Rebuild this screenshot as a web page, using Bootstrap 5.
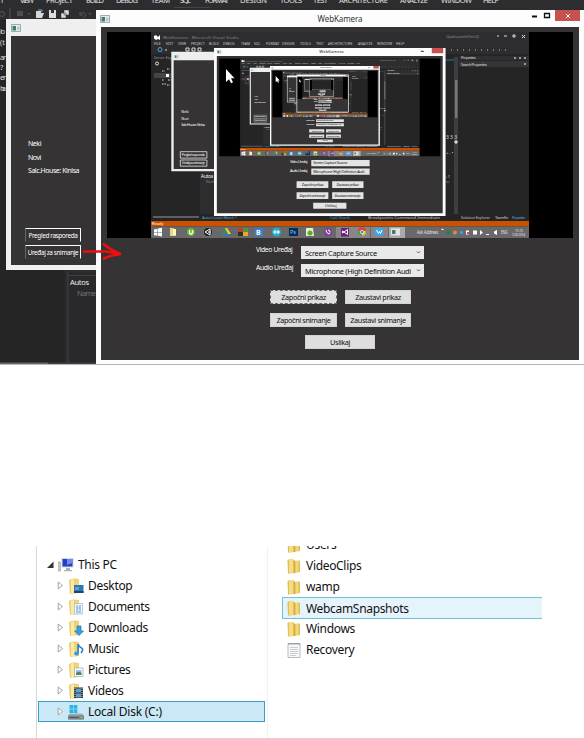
<!DOCTYPE html>
<html lang="hr">
<head>
<meta charset="utf-8">
<title>WebKamera</title>
<meta name="viewport" content="width=device-width, initial-scale=1">
<link href="https://cdn.jsdelivr.net/npm/bootstrap@5.3.0/dist/css/bootstrap.min.css" rel="stylesheet">
<style>
body{width:584px;height:738px;overflow:hidden;background:#fff;color:#111;font-family:"Noto Sans","Open Sans",sans-serif;font-size:12px}
.desktop{height:365px;background:#252526;border-bottom:1px solid #b5b5b5}
.ide-top{height:20px;background:#2d2d30}
.ide-svg{left:0;top:0}
.win{border:solid #f0f0f0;background:#353333}
.win-schedule{left:6px;top:19px;width:96px;height:251px;border-width:0 0 5px 5px}
.win-schedule .bar{height:17px;background:#efefef}
.win-schedule .names{margin:101px 0 0 17px;font-size:7px;line-height:13.5px;color:#fff;letter-spacing:-.45px;white-space:nowrap}
.win-schedule .acts{margin:50px 0 0 14px;gap:3px}
.act{width:56px;height:14px;border:1px solid #fff;border-left-color:#666;border-bottom-color:#3c3a3a;border-radius:0;background:#353333;color:#fff;font-size:6.4px;line-height:13px;padding:0;letter-spacing:-.37px;white-space:nowrap}
.win-cam{left:96px;top:10px;width:488px;height:354px;border-color:#fdfdfd;border-width:0 5px 4px 5px}
.win-cam .bar{height:17px;margin:0 -5px;background:#fdfdfd;font-size:8px;line-height:16px;color:#333;position:relative}
.win-cam .bar .ttl{letter-spacing:-.1px}
.ctl{top:0;right:4px}
.capture{display:block;margin:5px 0 0 6px;width:466px;height:206px}
.fields{margin:8px 0 0 155px;gap:5px;color:#fff}
.fields label{width:45px;font-size:6.8px;line-height:8px;letter-spacing:-.38px;white-space:nowrap}
.cam-select{width:123px;height:13px;background:#e9e9e9;border:0;border-radius:0;color:#111;font-size:7.4px;line-height:14px;padding:0 3px 0 4px;letter-spacing:-.32px;white-space:nowrap}
.cam-btn{height:14px;background:#dedede;border:1px solid #d2d2d2;border-radius:0;color:#111;font-size:7.3px;line-height:13px;padding:0;letter-spacing:-.38px;white-space:nowrap}
.cam-btn.w1{width:67px}.cam-btn.w2{width:66px}.cam-btn.w3{width:70px}
.cam-btn.focus-dots{border:1px dashed #666}
.g1{margin:13px 0 0 169px;gap:8px}.g2{margin:9px 0 0 169px;gap:8px}.g3{margin:8px 0 0 204px}
.arrow{left:80px;top:240px}
.explorer{margin-top:181px;height:192px;overflow:hidden;letter-spacing:-.32px}
.tree{margin-left:36px;width:232px;border-left:1px solid #d4d7dc;border-right:1px solid #f2f2f2;padding:8px 2px 0 1px}
.node{height:21px;padding-left:18px;border:1px solid transparent;white-space:nowrap;line-height:19px}
.node.root{padding-left:8px}
.node.sel span{letter-spacing:-.24px}
.node .tri{width:7px;height:9px;margin-right:4px}
.node .ico{width:16px;height:16px;margin-right:4px}
.node.sel{background:#cbe8f6;border-color:#3f9fc0}
.files{margin:-12px 0 0 14px;width:260px}
.file{height:21px;padding-left:3px;white-space:nowrap;line-height:21px;border:1px solid transparent;border-right:0}
.file .ico{width:16px;height:16px;margin-right:4px}
.file.hot{background:#e5f3fb;border-color:#70c0d7;height:22px;margin-bottom:-1px}
</style>
<script src="https://cdn.jsdelivr.net/npm/bootstrap@5.3.0/dist/js/bootstrap.bundle.min.js"></script>
</head>
<body>
<svg width="0" height="0" class="position-absolute" aria-hidden="true">
<defs>
<linearGradient id="gold" x1="0" x2="1"><stop offset="0" stop-color="#d9b23f"/><stop offset=".5" stop-color="#f6df86"/><stop offset="1" stop-color="#dcb648"/></linearGradient>
<symbol id="folder" viewBox="0 0 16 16"><path d="M1.500 2L4 1l4 1v13l-6 .5z" fill="#e2bd52"/><path d="M3 1.500L7.500.5 8 14.500l-5 1z" fill="#f5dd87"/><path d="M8 3l5-.8 1 1V14l-6 1.300z" fill="url(#gold)"/><path d="M8 2v13" stroke="#c99f35" stroke-width=".8"/></symbol>
<symbol id="half" viewBox="0 0 16 16"><path d="M1 2l4-1.500L11 1v14l-9 .7z" fill="#e8c65f"/><path d="M2.500 2L6 .8 7 15l-4 .5z" fill="#fbe9a6"/><path d="M7 1.500l4-.5v13.500l-4 .8z" fill="#efd47b"/></symbol>
<symbol id="winicon" viewBox="0 0 10 8"><path d="M.5.5h9v7h-9z" fill="#e8eef0" stroke="#8b989c" stroke-width=".8"/><path d="M1.500 2h3.500v4.500H1.500z" fill="#3f7d73"/><path d="M6 2.500h2.500v3.500H6z" fill="#b7c8d2"/></symbol>
<symbol id="closed" viewBox="0 0 7 9"><path d="M1.200 1v7l4.300-3.500z" fill="#fff" stroke="#999" stroke-width=".9"/></symbol>
<!-- Captured desktop in page coordinates -->
<g id="screen" font-family="Noto Sans, sans-serif">
<path d="M107 32h466v206H107z" fill="#000"/>
<path d="M151 32h378v206H151z" fill="#252526"/>
<path d="M151 32h378v22H151z" fill="#2d2d30"/>
<path d="M154 36l2-1 2 2 2-2v5l-2-1-2 1-2-1.500z" fill="#fff"/>
<g font-size="4.200" fill="#858585"><text x="163" y="39" textLength="76">WebKamera - Microsoft Visual Studio</text><text x="446" y="38" textLength="33">Quick Launch (Ctrl+Q)</text></g>
<g font-size="3.400" fill="#c5c5c5"><text x="154" y="44.500">FILE</text><text x="166" y="44.500">EDIT</text><text x="178" y="44.500">VIEW</text><text x="191" y="44.500">PROJECT</text><text x="209" y="44.500">BUILD</text><text x="223" y="44.500">DEBUG</text><text x="241" y="44.500">TEAM</text><text x="254" y="44.500">SQL</text><text x="266" y="44.500">FORMAT</text><text x="282" y="44.500">DESIGN</text><text x="300" y="44.500">TOOLS</text><text x="316" y="44.500">TEST</text><text x="328" y="44.500">ARCHITECTURE</text><text x="358" y="44.500">ANALYZE</text><text x="377" y="44.500">WINDOW</text><text x="396" y="44.500">HELP</text></g>
<g fill="none" stroke="#ddd" stroke-width="1"><path d="M497 36h2m5 0h3M513 35h2v2h-2zM522 35l3 3m0-3l-3 3M186 48h3v3h-3zM192 48h3v3h-3zM198 48h3v3h-3z"/><circle cx="160" cy="49.500" r="2" stroke="#4aa3dd"/><path d="M165 50h2"/><circle cx="157" cy="63.500" r="1.500"/><path d="M162 71h3m2-2h3M161 75h2m3 1h3M162 80h2m4 0h3M162 84h4m1 1h3" stroke-dasharray="1.500 1"/></g>
<path d="M154 73h17v5h-17z" fill="#44444a"/><path d="M166 74h3v3h-3z" fill="#fff"/>
<text x="154" y="59" font-size="3.600" fill="#999">Server Explorer</text>
<path d="M445 60h12" stroke="#237aa5"/><path d="M451 50h60" stroke="#777" stroke-width="2" stroke-dasharray="1 5"/>
<path d="M454 57h4v157h-4z" fill="#3e3e42"/><path d="M455 80h2.500v38H455z" fill="#77777c"/>
<path d="M458 55h71v159h-71z" fill="#252526"/><path d="M459 56h70v4h-70z" fill="#303033"/><path d="M459 61h70v6h-70z" fill="#353538"/>
<g font-size="4" fill="#ddd"><text x="461" y="59.300" textLength="15">Properties</text><text x="461" y="65.600" textLength="26">Search Properties</text><text x="446" y="138.500" font-size="5" textLength="11">333</text><text x="446" y="154">+ - •</text><text x="446" y="178">:  ?</text><text x="446" y="183">:::</text></g>
<path d="M514 58h2m3 0h2m3 0h2M525 63v2" stroke="#fff"/><path d="M456 140v4m-2-2h4" stroke="#fff"/>
<path d="M200 170h16v44h-16z" fill="#2d2d30"/><text x="201" y="178" font-size="4.500" fill="#fff">Autos</text><text x="206" y="183" font-size="3.600" fill="#888">Name</text>
<path d="M153 217h46" stroke="#5d5d62" stroke-width="2"/>
<g font-size="4" fill="#ccc"><text x="202" y="218.500" fill="#4fa2d5" textLength="35">Autos Locals Watch 1</text><text x="330" y="218.500" fill="#4fa2d5" textLength="20">Call Stack</text><text x="368" y="218.500" textLength="72" lengthAdjust="spacingAndGlyphs">Breakpoints Command Immediate</text><text x="461" y="218.500" textLength="29" lengthAdjust="spacingAndGlyphs">Solution Explorer</text><text x="495" y="218.500" textLength="13">Team Ex</text><text x="512" y="218.500" fill="#4fa2d5" textLength="13">Properties</text></g>
<path d="M151 221h378v5.500H151z" fill="#ca5100"/><text x="152" y="225" font-size="4" fill="#fff">Ready</text>
<path d="M151 226.500h378V238H151z" fill="#69696b"/>
<path d="M336 227h17v11h-17zM353 227h17v11h-17zM371 227h17v11h-17z" fill="#8a8588"/><path d="M389 227h16v11h-16z" fill="#aaa"/>
<path d="M154 229.500l3.500-.8v3.300H154zm4-1l4-.7v4.200h-4zm-4 4h3.500v3.300l-3.500-.6zm4 0h4v4l-4-.7z" fill="#fff"/>
<path d="M170 228h3l3 2v6h-6z" fill="#ead68b"/><path d="M173 229h3v6h-3z" fill="#fff6c6"/>
<circle cx="191" cy="232" r="4" fill="#62b62f"/><path d="M189.500 230v3q1.500 2 3 0v-3" fill="none" stroke="#fff" stroke-width="1.300"/>
<circle cx="208" cy="232" r="4" fill="#222"/><path d="M205 232l5-3v6zM208 232h3" fill="none" stroke="#fff"/>
<path d="M222 234l3-6 2 2-3 6z" fill="#239b58"/><path d="M225 228h2l4 6h-3z" fill="#f6cf36"/><path d="M224 236l2-2h5l-1 2z" fill="#3274cf"/>
<path d="M238 228h5v4h-5z" fill="#c33d2c"/><path d="M243 228h5v4h-5z" fill="#4f963b"/><path d="M238 232h5v4h-5z" fill="#2e302b"/><path d="M243 232h5v4h-5z" fill="#e6a929"/>
<path d="M255 228h8v8.500h-8z" fill="#397fd1"/><text x="256" y="235" font-size="7" font-weight="700" fill="#fff">B</text>
<circle cx="276.500" cy="232" r="4.500" fill="#28abc9"/><path d="M273 232h7m-5-2v4m3-4v4" stroke="#fff"/>
<path d="M289 228h9v8h-9z" fill="#062b58"/><text x="290" y="234" font-size="5.500" fill="#8fd0ff">Ps</text>
<path d="M306 228h7l1 8h-8z" fill="#e5efce"/><circle cx="310" cy="233" r="2.500" fill="#62a92b"/>
<circle cx="328" cy="232" r="4.500" fill="#7d4692"/><path d="M326 230q0 3 3 4l1-1.500m-2-2.500q2 0 2 2" stroke="#fff" fill="none"/>
<path d="M341 228h8v8.500h-8z" fill="#68217a"/><path d="M342.500 231l5 3.500v-5l-5 3.500z" fill="none" stroke="#fff"/>
<circle cx="362" cy="232" r="4" fill="#e2bd32"/><path d="M358 231a4 4 0 0 1 8 0z" fill="#d84636"/><path d="M358 231a4 4 0 0 0 4 5v-4z" fill="#3b9d53"/><circle cx="362" cy="232" r="1.700" fill="#3b82dc" stroke="#fff" stroke-width=".7"/>
<path d="M375 228h8v8h-8z" fill="#3aa7e8"/><path d="M376.500 230l2 3.500 1-2 1 2 1.500-3.500" fill="none" stroke="#fff"/>
<path d="M391 228.500h9v7h-9z" fill="#e5e5e5"/><path d="M392 230h3.500v4H392z" fill="#3d7d72"/>
<g font-size="4.500" fill="#e4e4e4"><text x="417" y="234" textLength="21" lengthAdjust="spacingAndGlyphs">Ask Address</text><text x="501" y="234" textLength="6.500" lengthAdjust="spacingAndGlyphs">ENG</text><text x="515" y="231.500" font-size="3.200">15:15</text><text x="512" y="236" font-size="3.200" textLength="13">12.6.2014</text></g>
<g fill="#fff"><path d="M441 230l1.500-1.500L444 230z"/><circle cx="448.500" cy="232.500" r="2" fill="#238035"/><circle cx="455" cy="232.500" r="2" fill="#e88737"/><circle cx="461.500" cy="232.500" r="1.800" fill="#3b9ddd"/><path d="M466 230.500h3v4h-3zM473 230.500h4v4h-4z"/><path d="M467 232h2v2h-2z" fill="#d44"/><path d="M480 230v5l3-2.500zM486 234h3v1h-3zM494 231.500l3-1.500v5l-3-1.500z"/></g>
</g>
<!-- Window pair used inside the capture -->
<g id="wins" font-family="Noto Sans, sans-serif" fill="#fff">
<path d="M6 18h94v252H6z" fill="#eee"/><path d="M11 36h89v229H11z" fill="#353333"/><use href="#winicon" x="12" y="24" width="10" height="8"/>
<g font-size="7.500"><text x="27" y="147">Neki</text><text x="27" y="161">Novi</text><text x="27" y="174" textLength="50">Salc.House: Kinisa</text></g>
<g fill="none" stroke="#fff" stroke-width="1.500"><path d="M25 228.500h56V242H25zM25 246h56v13H25z"/></g>
<g font-size="7"><text x="28" y="238" textLength="49">Pregled rasporeda</text><text x="28" y="255" textLength="49">Uređaj za snimanje</text></g>
<path d="M96 10h488v354H96z" fill="#fdfdfd"/><path d="M102 27h476v331H102z" fill="#353333"/><path d="M555 10h24v11h-24z" fill="#c75050"/><path d="M532 17h6" stroke="#111" stroke-width="2"/><use href="#winicon" x="102" y="14" width="10" height="8"/>
<text x="318" y="21" font-size="9" fill="#222">WebKamera</text>
<use href="#screen"/>
<g font-size="8"><text x="256" y="252" textLength="37">Video Uređaj</text><text x="256" y="271" textLength="37">Audio Uređaj</text></g>
<path d="M301 246h123v13H301zM301 264h123v13H301zM270 291h67v14h-67zM345 291h66v14h-66zM270 314h67v14h-67zM345 314h66v14h-66zM305 336h70v13h-70z" fill="#e4e4e4"/>
<g font-size="8" fill="#111"><text x="305" y="255.500" textLength="72">Screen Capture Source</text><text x="305" y="273.500" textLength="108">Microphone (High Definition Audi</text><text x="281" y="301" textLength="46">Započni prikaz</text><text x="354" y="301" textLength="47">Zaustavi prikaz</text><text x="276" y="324" textLength="55">Započni snimanje</text><text x="350" y="324" textLength="55">Zaustavi snimanje</text><text x="330" y="345">Uslikaj</text></g>
</g>
<path id="pointer" d="M226 69v13l3-2.700 2 4 2-1-2-4h3.500z" fill="#fff"/>
</defs>
</svg>

<section class="desktop position-relative overflow-hidden">
<div class="ide-top"></div>
<svg class="ide-svg position-absolute" width="584" height="365" font-family="Noto Sans, sans-serif">
<g font-size="7.500" fill="#e0e0e0"><text x="0" y="3" textLength="6">T</text><text x="20" y="3" textLength="14">VIEW</text><text x="46" y="3" textLength="27">PROJECT</text><text x="86" y="3" textLength="18">BUILD</text><text x="116" y="3" textLength="22">DEBUG</text><text x="151" y="3" textLength="19">TEAM</text><text x="180" y="3" textLength="11">SQL</text><text x="205" y="3" textLength="24">FORMAT</text><text x="240" y="3" textLength="27">DESIGN</text><text x="280" y="3" textLength="22">TOOLS</text><text x="313" y="3" textLength="15">TEST</text><text x="339" y="3" textLength="49">ARCHITECTURE</text><text x="400" y="3" textLength="28">ANALYZE</text><text x="441" y="3" textLength="31">WINDOW</text><text x="483" y="3" textLength="16">HELP</text></g>
<path d="M10 8v11" stroke="#555"/><circle cx="2" cy="14" r="2.500" fill="none" stroke="#555"/>
<path d="M17 11h6v5h-6zM27 13h4l-2 2zM88 13h4l-2 2z" fill="#4d4d50"/>
<path d="M36 11h5v2h3l-2 5h-6z" fill="#d8d8d8"/><path d="M38 10h4v2" stroke="#65a8dc" fill="none"/>
<path d="M49 10h7v8h-7z" fill="#ddd"/><path d="M51 10h3v3h-3z" fill="#333"/>
<path d="M64 10h5v5h-5zM61 13h5v5h-5z" fill="#ddd" stroke="#333" stroke-width=".5"/>
<path d="M80 12v3h3m-3-.5q3-4 5-1t-2 5" fill="none" stroke="#555"/>
<path d="M174 7.500h36" stroke="#444"/>
<g font-size="7.500" fill="#ddd"><text x="0" y="34" textLength="5">lo</text><text x="0" y="45" textLength="5">(t</text><text x="0" y="59.500" textLength="6">ar</text><text x="0" y="69.500">?</text><text x="0" y="80" textLength="6">er</text><text x="0" y="90.500" textLength="6">ha</text></g>
<path d="M65 270h32v95H65z" fill="#2d2d30"/><path d="M68 272h30v93H68z" fill="#29292c"/><path d="M68 275.500h30M68 272v93" stroke="#3f3f46"/>
<text x="70" y="285" font-size="7.500" fill="#eee" textLength="19">Autos</text><text x="77" y="296" font-size="7.500" fill="#707070" textLength="19">Name</text>
<path d="M0 363.500h48" stroke="#66666a" stroke-width="2"/><path d="M48 363.500h48" stroke="#3f3f42" stroke-width="2"/>
</svg>

<div class="win win-schedule position-absolute">
<div class="bar d-flex align-items-center"><svg width="10" height="8" class="ms-0"><use href="#winicon"/></svg></div>
<div class="names"><div>Neki</div><div>Novi</div><div>Salc.House: Kinisa</div></div>
<div class="acts d-flex flex-column"><button class="act btn">Pregled rasporeda</button><button class="act btn">Uređaj za snimanje</button></div>
</div>

<div class="win win-cam position-absolute">
<div class="bar d-flex align-items-center justify-content-center">
<svg width="10" height="8" class="position-absolute start-0 ms-1"><use href="#winicon"/></svg>
<span class="ttl">WebKamera</span>
<svg class="ctl position-absolute" width="52" height="12"><path d="M4 6.500h5" stroke="#111" stroke-width="2"/><path d="M16.500 3.500h5v4h-5z" fill="none" stroke="#111" stroke-width="1.300"/><path d="M27 0h25v11H27z" fill="#c75050"/><path d="M38 4l4 4m0-4l-4 4" stroke="#fff"/></svg>
</div>
<svg class="capture" viewBox="107 32 466 206">
<use href="#screen"/>
<g transform="translate(168.450 43.255) scale(.4745)"><use href="#wins"/>
<g transform="translate(168.450 43.255) scale(.4745)"><use href="#wins"/>
<g transform="translate(168.450 43.255) scale(.4745)"><use href="#wins"/>
<g transform="translate(168.450 43.255) scale(.4745)"><use href="#wins"/></g></g></g></g>
<use href="#pointer"/>
<use href="#pointer" transform="translate(168.450 43.255) scale(.4745)"/>
<use href="#pointer" transform="translate(248.379 63.779) scale(.2251)"/>
</svg>
<div class="fields d-flex flex-column">
<div class="d-flex"><label>Video Uređaj</label><div class="cam-select d-flex justify-content-between"><span>Screen Capture Source</span><svg width="5" height="13"><path d="M1 5.500l1.500 1.500L4 5.500" fill="none" stroke="#444" stroke-width=".9"/></svg></div></div>
<div class="d-flex"><label>Audio Uređaj</label><div class="cam-select d-flex justify-content-between"><span>Microphone (High Definition Audi</span><svg width="5" height="13" class="flex-shrink-0"><path d="M1 5.500l1.500 1.500L4 5.500" fill="none" stroke="#444" stroke-width=".9"/></svg></div></div>
</div>
<div class="g1 d-flex"><button class="btn cam-btn w1 focus-dots">Započni prikaz</button><button class="btn cam-btn w2">Zaustavi prikaz</button></div>
<div class="g2 d-flex"><button class="btn cam-btn w1">Započni snimanje</button><button class="btn cam-btn w2">Zaustavi snimanje</button></div>
<div class="g3 d-flex"><button class="btn cam-btn w3">Uslikaj</button></div>
</div>
<svg class="arrow position-absolute" width="46" height="22"><path d="M3 11.500h23l14 2.500M23 3.500q8 7 18 10.500-10 1-18 5" fill="none" stroke="#e81010" stroke-width="2.700"/></svg>
</section>

<section class="explorer d-flex">
<nav class="tree">
<div class="node root d-flex align-items-center"><svg class="tri" viewBox="0 0 7 9"><path d="M6.500 1.500V8H0z" fill="#333"/></svg><svg class="ico" viewBox="0 0 16 16"><path d="M0 5h2.500v9H0z" fill="#c4ccd2" stroke="#98a2aa" stroke-width=".6"/><path d="M3.500 1h12v9.500h-12z" fill="#d3d8db"/><path d="M4.500 2h10v7.500h-10z" fill="#233fc4"/><path d="M9 2h5.500v4L9 8z" fill="#6d8cf0"/><path d="M8 11h4v2h2v1.200H6V13h2z" fill="#a6b2ba"/></svg><span>This PC</span></div>
<div class="node d-flex align-items-center"><svg class="tri"><use href="#closed"/></svg><svg class="ico" viewBox="0 0 16 16"><use href="#half"/><path d="M6 7h9.500v8H6z" fill="#2e79b3"/><path d="M6 13h9.500v2H6z" fill="#19476e"/><path d="M7 9h4v3H7z" fill="#5ba2d2"/></svg><span>Desktop</span></div>
<div class="node d-flex align-items-center"><svg class="tri"><use href="#closed"/></svg><svg class="ico" viewBox="0 0 16 16"><use href="#half"/><path d="M6.500 4.500h8v10.500h-8z" fill="#f5faff" stroke="#9bb5cc" stroke-width=".7"/><path d="M8 7h2m1 0h2M8 9h5M8 11h2m1 0h2M8 13h5" stroke="#5692cd"/></svg><span>Documents</span></div>
<div class="node d-flex align-items-center"><svg class="tri"><use href="#closed"/></svg><svg class="ico" viewBox="0 0 16 16"><use href="#half"/><path d="M9 6h4v5h2.500L11 15.500 6.500 11H9z" fill="#36a1e0" stroke="#1772b5" stroke-width=".7"/></svg><span>Downloads</span></div>
<div class="node d-flex align-items-center"><svg class="tri"><use href="#closed"/></svg><svg class="ico" viewBox="0 0 16 16"><use href="#half"/><path d="M10 3v9.500M10 3q1 3 3.500 4T13 12" fill="none" stroke="#2a86c9" stroke-width="1.700"/><ellipse cx="8.500" cy="12.500" rx="2.500" ry="2" fill="#3b9bdc"/></svg><span>Music</span></div>
<div class="node d-flex align-items-center"><svg class="tri"><use href="#closed"/></svg><svg class="ico" viewBox="0 0 16 16"><use href="#half"/><path d="M6.500 6h8.500v8.500H6.500z" fill="#fff" stroke="#a2b0b8" stroke-width=".8"/><path d="M8 8h5.500v5H8z" fill="#8fc4df"/><path d="M8 11q3-2 5.500 0v2H8z" fill="#4b8265"/></svg><span>Pictures</span></div>
<div class="node d-flex align-items-center"><svg class="tri"><use href="#closed"/></svg><svg class="ico" viewBox="0 0 16 16"><use href="#half"/><path d="M6 4.500h9V15H6z" fill="#273642"/><path d="M8 5.500h5v4H8zm0 5h5v4H8z" fill="#659fc2"/><path d="M7 5v10m7-10v10" stroke="#fff" stroke-width=".8" stroke-dasharray="1 1"/></svg><span>Videos</span></div>
<div class="node sel d-flex align-items-center"><svg class="tri"><use href="#closed"/></svg><svg class="ico" viewBox="0 0 16 16"><path d="M1.500 1h3.700v3.700H1.500zm4.200 0h3.700v3.700H5.700zM1.500 5.200h3.700v3.700H1.500zm4.200 0h3.700v3.700H5.700z" fill="#25b7ea"/><path d="M2 9.500h12l2 2v4H0v-4z" fill="#a5adb2"/><path d="M0 11.500h16v4H0z" fill="#7a858c"/><path d="M1.500 13.500h9" stroke="#4e5a62"/><path d="M12.500 13.500h2" stroke="#7be36b"/></svg><span>Local Disk (C:)</span></div>
</nav>
<div class="files">
<div class="file d-flex align-items-center"><svg class="ico"><use href="#folder"/></svg><span>Users</span></div>
<div class="file d-flex align-items-center"><svg class="ico"><use href="#folder"/></svg><span>VideoClips</span></div>
<div class="file d-flex align-items-center"><svg class="ico"><use href="#folder"/></svg><span>wamp</span></div>
<div class="file hot d-flex align-items-center"><svg class="ico"><use href="#folder"/></svg><span>WebcamSnapshots</span></div>
<div class="file d-flex align-items-center"><svg class="ico"><use href="#folder"/></svg><span>Windows</span></div>
<div class="file d-flex align-items-center"><svg class="ico" viewBox="0 0 16 16"><path d="M2 1.500h12v14H2z" fill="#f8f9fa" stroke="#a6aaad" stroke-width=".8"/><path d="M3 1v2m2-2v2m2-2v2m2-2v2m2-2v2m2-2v2" stroke="#777" stroke-width=".7"/><path d="M4 5.500h8M4 7.500h8M4 9.500h8M4 11.500h8M4 13.500h6" stroke="#bcc3c8" stroke-width=".8"/></svg><span>Recovery</span></div>
</div>
</section>
</body>
</html>
